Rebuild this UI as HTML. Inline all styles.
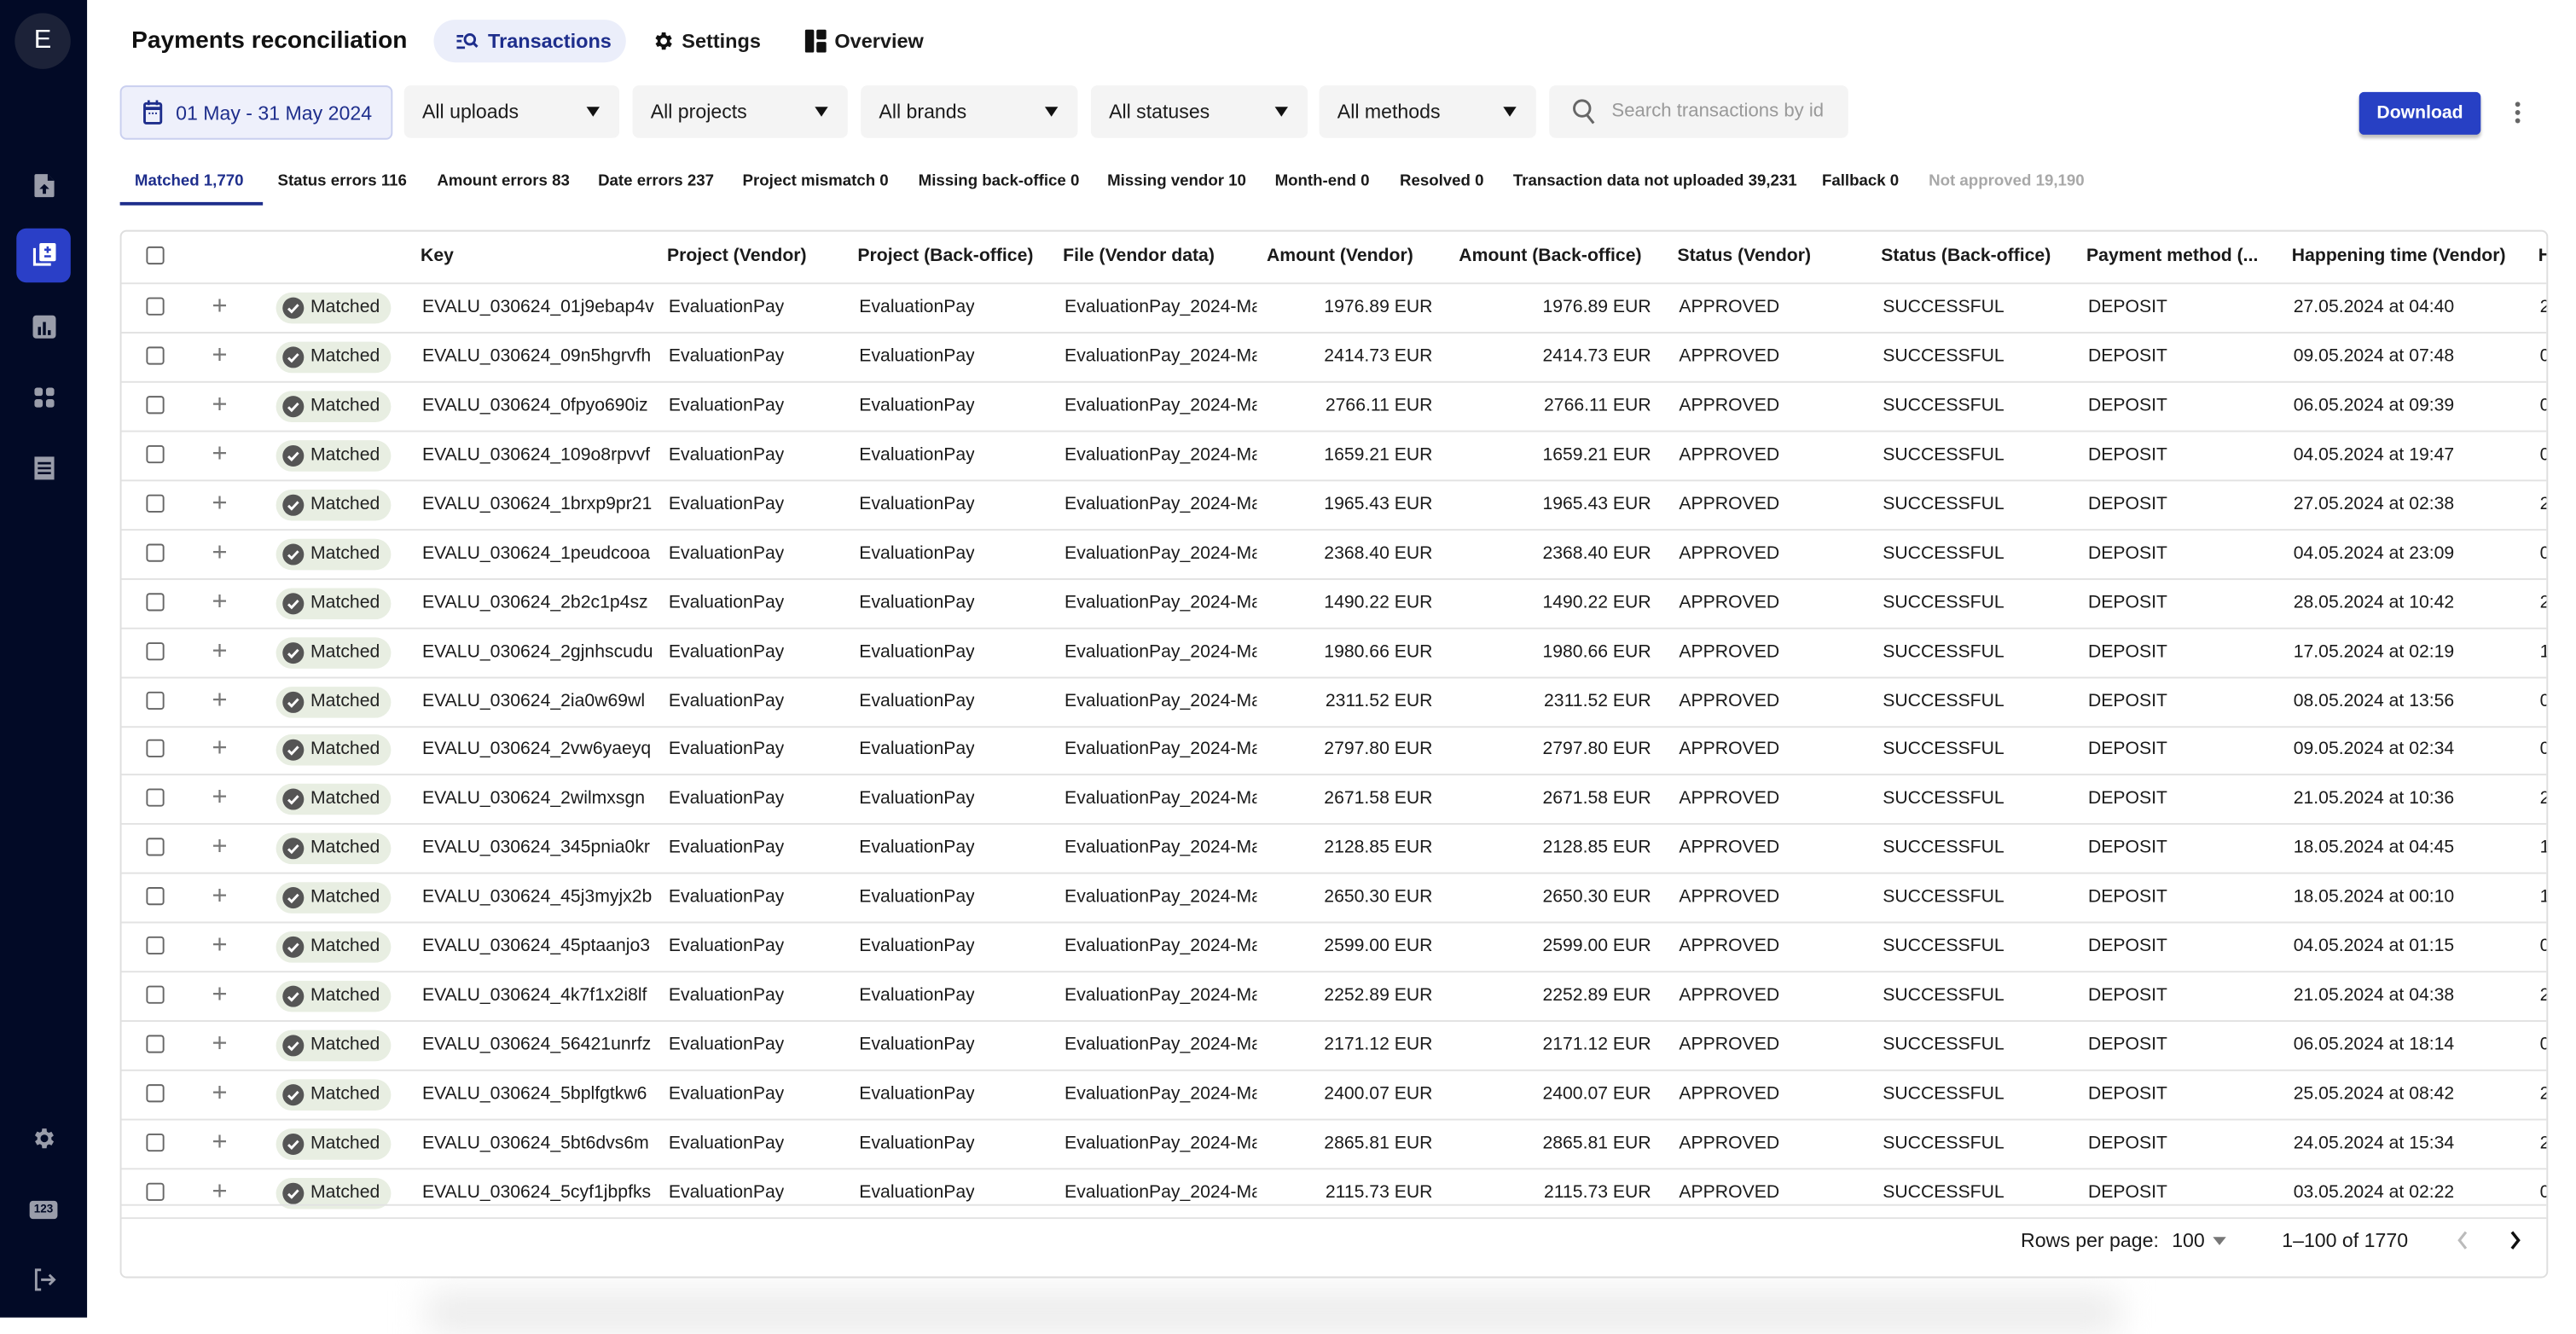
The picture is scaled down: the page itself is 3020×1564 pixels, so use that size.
<!DOCTYPE html>
<html><head><meta charset="utf-8">
<style>
html,body{margin:0;padding:0;width:3020px;height:1544px;overflow:hidden;background:#fff;}
#w{position:absolute;left:0;top:0;width:1568px;height:802px;transform:scale(1.92602);transform-origin:0 0;font-family:"Liberation Sans",Arial,sans-serif;color:#1a1a1a;}
.a{position:absolute;}
.sb{left:0;top:0;width:53px;height:802px;background:#020a26;}
.ic{position:absolute;left:19px;width:16px;height:16px;}
.title{left:80px;top:17px;font-size:14.6px;font-weight:bold;color:#111;}
.tab{top:12px;height:26px;line-height:26px;font-size:12.2px;font-weight:bold;}
.dd{top:52px;height:32px;background:#f4f4f4;border-radius:4px;font-size:12px;line-height:32px;color:#1a1a1a;}
.dd span{position:absolute;left:11px;}
.dd i{position:absolute;right:12px;top:13px;width:0;height:0;border-left:4px solid transparent;border-right:4px solid transparent;border-top:6px solid #111;}
.ft{top:105px;font-size:9.7px;font-weight:bold;color:#1a1a1a;white-space:nowrap;}
.tbl{left:73px;top:140px;width:1476px;height:636px;border:1px solid #dedede;border-radius:4px;overflow:hidden;}
.hr{position:absolute;left:0;width:1476px;height:30px;border-bottom:1px solid #e2e2e2;font-size:11px;}
.c{position:absolute;top:0;line-height:30px;white-space:nowrap;overflow:hidden;}
.hd{font-weight:bold;font-size:11px;}
.cb{position:absolute;left:15px;width:9px;height:9px;border:1.6px solid #666;border-radius:2px;}
.pl{position:absolute;left:55px;top:7px;font-size:16px;color:#777;line-height:16px;}
.bd{position:absolute;left:94px;top:6px;width:70px;height:19px;border-radius:10px;background:#e8eee2;font-size:11px;line-height:19px;}
.bd b{position:absolute;left:4px;top:3px;width:13px;height:13px;border-radius:50%;background:#555;}
.bd span{position:absolute;left:21px;font-weight:normal;color:#222;}
.r{text-align:right;}
</style></head><body><div id="w">
<div class="a sb">
  <div class="a" style="left:9px;top:8px;width:34px;height:34px;border-radius:50%;background:#1c2238;color:#fff;font-size:16px;line-height:34px;text-align:center;">E</div>
  <svg class="ic" style="top:105px" viewBox="0 0 16 16"><path d="M3 1h7l4 4v9a1 1 0 0 1-1 1H3a1 1 0 0 1-1-1V2a1 1 0 0 1 1-1z" fill="#9a9daa"/><path d="M10 1v4h4" fill="#020a26"/><path d="M8 7l-3 3h2v3h2v-3h2z" fill="#020a26"/></svg>
  <div class="a" style="left:10px;top:139px;width:33px;height:33px;border-radius:6px;background:#2a3fc7;"></div>
  <svg class="ic" style="top:147px" viewBox="0 0 16 16"><path d="M2 4v10h10" stroke="#fff" stroke-width="1.6" fill="none"/><rect x="5" y="1" width="10" height="11" rx="1" fill="#fff"/><path d="M10 3v4M8 5h4M8 9h4" stroke="#2a3fc7" stroke-width="1.3"/></svg>
  <svg class="ic" style="top:191px" viewBox="0 0 16 16"><rect x="1" y="1" width="14" height="14" rx="2" fill="#9a9daa"/><path d="M5 8v5M8 5v8M11 10v3" stroke="#020a26" stroke-width="1.8"/></svg>
  <svg class="ic" style="top:234px" viewBox="0 0 16 16"><rect x="2" y="2" width="5" height="5" rx="1.5" fill="#9a9daa"/><rect x="9" y="2" width="5" height="5" rx="1.5" fill="#9a9daa"/><rect x="2" y="9" width="5" height="5" rx="1.5" fill="#9a9daa"/><rect x="9" y="9" width="5" height="5" rx="1.5" fill="#9a9daa"/></svg>
  <svg class="ic" style="top:277px" viewBox="0 0 16 16"><rect x="2" y="1" width="12" height="14" fill="#9a9daa"/><path d="M4 5h8M4 8h8M4 11h8" stroke="#020a26" stroke-width="1.4"/></svg>
  <svg class="ic" style="top:685px" viewBox="0 0 24 24"><path d="M19.4 13a7.5 7.5 0 0 0 0-2l2.1-1.6-2-3.5-2.5 1a7 7 0 0 0-1.7-1L15 3h-4l-.4 2.7a7 7 0 0 0-1.7 1l-2.5-1-2 3.5L6.6 11a7.5 7.5 0 0 0 0 2l-2.1 1.6 2 3.5 2.5-1a7 7 0 0 0 1.7 1L11 21h4l.4-2.7a7 7 0 0 0 1.7-1l2.5 1 2-3.5zM13 15.5a3.5 3.5 0 1 1 0-7 3.5 3.5 0 0 1 0 7z" fill="#9a9daa" transform="translate(-1 0)"/></svg>
  <div class="a" style="left:18px;top:731px;width:17px;height:11px;border-radius:2px;background:#9a9daa;color:#020a26;font-size:7px;font-weight:bold;line-height:11px;text-align:center;">123</div>
  <svg class="ic" style="top:771px" viewBox="0 0 16 16"><path d="M6 2H3v12h3" stroke="#9a9daa" stroke-width="1.5" fill="none"/><path d="M6 8h8M11 5l3 3-3 3" stroke="#9a9daa" stroke-width="1.5" fill="none"/></svg>
</div>

<div class="a title">Payments reconciliation</div>
<div class="a tab" style="left:264px;width:117px;background:#ebeefa;border-radius:13px;color:#1e2e8c;">
  <svg class="a" style="left:14px;top:7px" width="13" height="12" viewBox="0 0 13 12"><path d="M0 3h4M0 6h3M0 10h5" stroke="#1e2e8c" stroke-width="1.4"/><circle cx="8" cy="5" r="3" stroke="#1e2e8c" stroke-width="1.5" fill="none"/><path d="M10 7l2.5 2.5" stroke="#1e2e8c" stroke-width="1.6"/></svg>
  <span class="a" style="left:33px">Transactions</span></div>
<div class="a tab" style="left:397px;">
  <svg class="a" style="left:0;top:6px" width="14" height="14" viewBox="0 0 24 24"><path d="M19.4 13a7.5 7.5 0 0 0 0-2l2.1-1.6-2-3.5-2.5 1a7 7 0 0 0-1.7-1L15 3h-4l-.4 2.7a7 7 0 0 0-1.7 1l-2.5-1-2 3.5L6.6 11a7.5 7.5 0 0 0 0 2l-2.1 1.6 2 3.5 2.5-1a7 7 0 0 0 1.7 1L11 21h4l.4-2.7a7 7 0 0 0 1.7-1l2.5 1 2-3.5zM13 15.5a3.5 3.5 0 1 1 0-7 3.5 3.5 0 0 1 0 7z" fill="#111" transform="translate(-1 0)"/></svg>
  <span class="a" style="left:18px">Settings</span></div>
<div class="a tab" style="left:490px;">
  <svg class="a" style="left:0;top:6px" width="13" height="14" viewBox="0 0 13 14"><rect x="0" y="0" width="5.5" height="14" rx="1" fill="#111"/><rect x="7" y="0" width="6" height="6" rx="1" fill="#111"/><rect x="7" y="7.5" width="6" height="6.5" rx="1" fill="#111"/></svg>
  <span class="a" style="left:18px">Overview</span></div>

<div class="a dd" style="left:73px;width:164px;height:31px;background:#eef0fb;border:1px solid #c9cfef;">
  <svg class="a" style="left:13px;top:8px" width="12" height="15" viewBox="0 0 12 15"><rect x="1" y="2" width="10" height="12" rx="1" stroke="#1e2e8c" stroke-width="1.5" fill="none"/><path d="M1 5h10" stroke="#1e2e8c" stroke-width="2"/><path d="M3.5 0v3M8.5 0v3" stroke="#1e2e8c" stroke-width="1.4"/><path d="M3.5 8h1M5.5 8h1M7.5 8h1" stroke="#1e2e8c" stroke-width="1"/></svg>
  <span style="left:33px;color:#1e2e8c;">01 May - 31 May 2024</span></div>
<div class="a dd" style="left:246px;width:131px;"><span>All uploads</span><i></i></div>
<div class="a dd" style="left:385px;width:131px;"><span>All projects</span><i></i></div>
<div class="a dd" style="left:524px;width:132px;"><span>All brands</span><i></i></div>
<div class="a dd" style="left:664px;width:132px;"><span>All statuses</span><i></i></div>
<div class="a dd" style="left:803px;width:132px;"><span>All methods</span><i></i></div>
<div class="a dd" style="left:943px;width:182px;color:#999;">
  <svg class="a" style="left:14px;top:8px" width="14" height="16" viewBox="0 0 14 16"><circle cx="6" cy="6" r="4.8" stroke="#666" stroke-width="1.5" fill="none"/><path d="M9 10l4 5" stroke="#666" stroke-width="1.6"/></svg>
  <span style="left:38px;font-size:11.5px;">Search transactions by id</span></div>
<div class="a" style="left:1436px;top:56px;width:74px;height:26px;background:#2740c4;border-radius:3px;box-shadow:0 2px 2px rgba(0,0,0,.25);color:#fff;font-size:11px;font-weight:bold;line-height:26px;text-align:center;">Download</div>
<div class="a" style="left:1531px;top:62px;width:3px;height:3px;border-radius:50%;background:#666;box-shadow:0 5px 0 #666,0 10px 0 #666;"></div>

<div class="a ft" style="left:82px;color:#1e2e8c;">Matched 1,770</div>
<div class="a" style="left:73px;top:123px;width:87px;height:2px;background:#1e2e8c;"></div>
<div class="a ft" style="left:169px;">Status errors 116</div>
<div class="a ft" style="left:266px;">Amount errors 83</div>
<div class="a ft" style="left:364px;">Date errors 237</div>
<div class="a ft" style="left:452px;">Project mismatch 0</div>
<div class="a ft" style="left:559px;">Missing back-office 0</div>
<div class="a ft" style="left:674px;">Missing vendor 10</div>
<div class="a ft" style="left:776px;">Month-end 0</div>
<div class="a ft" style="left:852px;">Resolved 0</div>
<div class="a ft" style="left:921px;">Transaction data not uploaded 39,231</div>
<div class="a ft" style="left:1109px;">Fallback 0</div>
<div class="a ft" style="left:1174px;color:#a8a8a8;">Not approved 19,190</div>

<div class="a" style="left:260px;top:786px;width:1030px;height:26px;background:#ececec;filter:blur(10px);"></div>
<div class="a tbl" style="background:#fff;">
<div id="rows"></div>
<div class="a" style="left:0;top:592px;width:1476px;height:0;border-top:1px solid #e2e2e2;"></div>
<div class="a" style="left:1156px;top:607px;font-size:12px;">Rows per page:</div>
<div class="a" style="left:1248px;top:607px;font-size:12px;">100</div>
<div class="a" style="left:1273px;top:612px;width:0;height:0;border-left:4px solid transparent;border-right:4px solid transparent;border-top:5px solid #777;"></div>
<div class="a" style="left:1315px;top:607px;font-size:12px;">1–100 of 1770</div>
<svg class="a" style="left:1420px;top:607px" width="10" height="14" viewBox="0 0 10 14"><path d="M7 2L3 7l4 5" stroke="#bbb" stroke-width="1.6" fill="none"/></svg>
<svg class="a" style="left:1452px;top:607px" width="10" height="14" viewBox="0 0 10 14"><path d="M3 2l4 5-4 5" stroke="#111" stroke-width="1.8" fill="none"/></svg>
</div>
</div>
<script>
var d=[["01j9ebap4v","1976.89","27.05.2024 at 04:40","2"],["09n5hgrvfh","2414.73","09.05.2024 at 07:48","0"],["0fpyo690iz","2766.11","06.05.2024 at 09:39","0"],["109o8rpvvf","1659.21","04.05.2024 at 19:47","0"],["1brxp9pr21","1965.43","27.05.2024 at 02:38","2"],["1peudcooa","2368.40","04.05.2024 at 23:09","0"],["2b2c1p4sz","1490.22","28.05.2024 at 10:42","2"],["2gjnhscudu","1980.66","17.05.2024 at 02:19","1"],["2ia0w69wl","2311.52","08.05.2024 at 13:56","0"],["2vw6yaeyq","2797.80","09.05.2024 at 02:34","0"],["2wilmxsgn","2671.58","21.05.2024 at 10:36","2"],["345pnia0kr","2128.85","18.05.2024 at 04:45","1"],["45j3myjx2b","2650.30","18.05.2024 at 00:10","1"],["45ptaanjo3","2599.00","04.05.2024 at 01:15","0"],["4k7f1x2i8lf","2252.89","21.05.2024 at 04:38","2"],["56421unrfz","2171.12","06.05.2024 at 18:14","0"],["5bplfgtkw6","2400.07","25.05.2024 at 08:42","2"],["5bt6dvs6m","2865.81","24.05.2024 at 15:34","2"],["5cyf1jbpfks","2115.73","03.05.2024 at 02:22","0"]];
var o=-73,h='<div class="hr hd" style="top:0;height:31px"><div class="cb" style="top:9px"></div>';
function col(x,t,w,r){return '<div class="c'+(r?' r':'')+'" style="left:'+(x+o)+'px;'+(w?'width:'+w+'px;':'')+'">'+t+'</div>';}
var H=[[256,"Key"],[406,"Project (Vendor)"],[522,"Project (Back-office)"],[647,"File (Vendor data)"],[771,"Amount (Vendor)"],[888,"Amount (Back-office)"],[1021,"Status (Vendor)"],[1145,"Status (Back-office)"],[1270,"Payment method (..."],[1395,"Happening time (Vendor)"],[1545,"H"]];
H.forEach(function(c){h+=col(c[0]-1,c[1]);});
h+='</div>';
d.forEach(function(r,i){
 var t=31+i*29.94;
 h+='<div class="hr" style="top:'+t+'px"><div class="cb" style="top:9px"></div><div class="pl">+</div><div class="bd"><b><svg width="13" height="13" viewBox="0 0 13 13" style="position:absolute;left:0;top:0"><path d="M3.5 6.8l2 2 4-4.3" stroke="#fff" stroke-width="1.5" fill="none"/></svg></b><span>Matched</span></div>'
 +col(256,"EVALU_030624_"+r[0],144)+col(406,"EvaluationPay")+col(522,"EvaluationPay")+col(647,"EvaluationPay_2024-May",117)
 +col(771,r[1]+" EUR",100,1)+col(900,r[1]+" EUR",104,1)+col(1021,"APPROVED")+col(1145,"SUCCESSFUL")+col(1270,"DEPOSIT")+col(1395,r[2])+col(1545,r[3])+'</div>';
});
document.getElementById('rows').innerHTML=h;
</script>
</body></html>
